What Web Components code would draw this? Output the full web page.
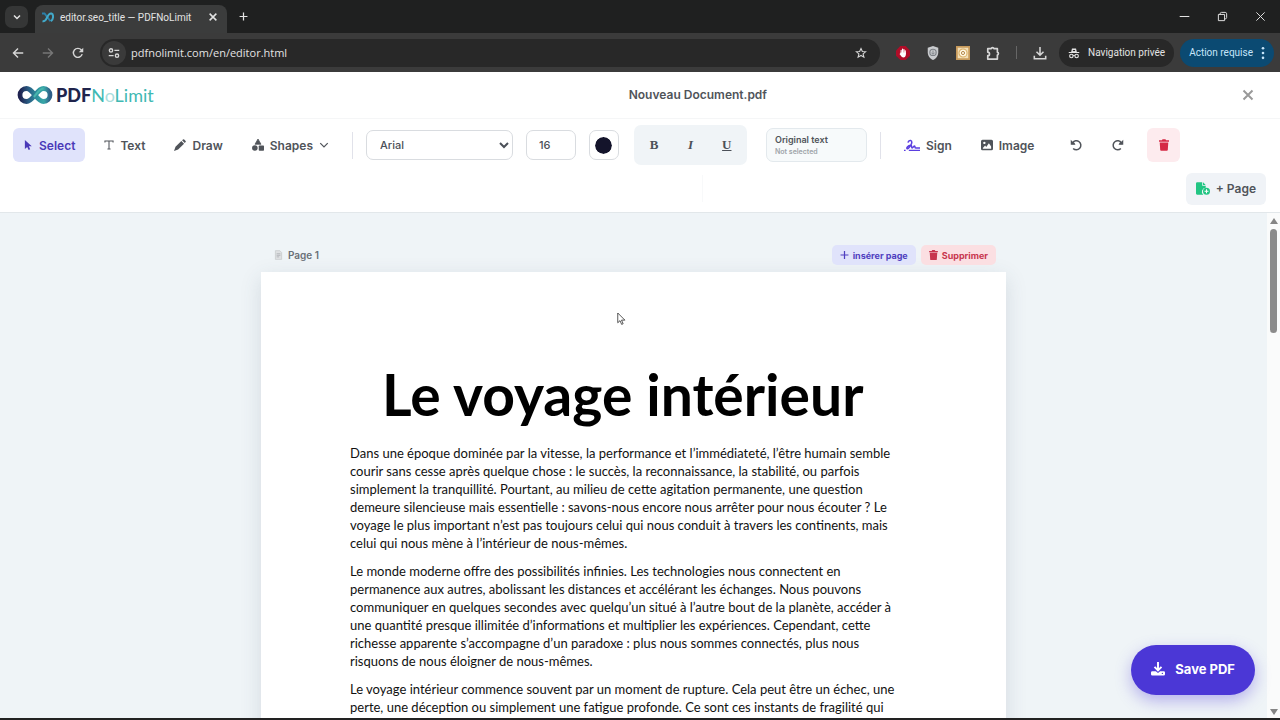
<!DOCTYPE html>
<html lang="en">
<head>
<meta charset="utf-8">
<meta name="viewport" content="width=device-width, initial-scale=1">
<title>editor.seo_title — PDFNoLimit</title>
<style>
  body {
    margin: 0;
    height: 100vh;
    overflow: hidden;
    font-family: Inter, sans-serif;
    color: #50545a;
  }
</style>
</head>
<body>
<browser-window>
  <pdf-editor></pdf-editor>
</browser-window>

<script>
/**
 * Registers a custom element whose shadow root is cloned from a template.
 *
 * @param {string} name - The tag name.
 * @param {string} html - Styles and markup of the shadow root.
 */
function register (name, html) {
  const template = document.createElement('template')
  template.innerHTML = html

  customElements.define(name, class extends HTMLElement {
    constructor () {
      super()
      this.attachShadow({ mode: 'open' }).append(template.content.cloneNode(true))
    }
  })
}

// Icon drawings: [viewBox, markup].
const icons = {
  down: ['0 0 16 16', '<path d="M4 6l4 4 4-4" fill="none" stroke="currentColor" stroke-width="2"/>'],
  chevron: ['0 0 16 16', '<path d="M2 5l6 6 6-6" fill="none" stroke="currentColor" stroke-width="2"/>'],
  close: ['0 0 16 16', '<path d="M3.500 3.500l9 9M12.500 3.500l-9 9" fill="none" stroke="currentColor" stroke-width="2"/>'],
  thin: ['0 0 16 16', '<path d="M2 2l12 12M14 2L2 14" fill="none" stroke="currentColor" stroke-width="1.4"/>'],
  cross: ['0 0 16 16', '<path d="M2 2l12 12M14 2L2 14" fill="none" stroke="currentColor" stroke-width="2.6"/>'],
  plus: ['0 0 16 16', '<path d="M8 1v14M1 8h14" fill="none" stroke="currentColor" stroke-width="2.2"/>'],
  back: ['0 0 16 16', '<path d="M15 8H2M8 2L2 8l6 6" fill="none" stroke="currentColor" stroke-width="1.9"/>'],
  forward: ['0 0 16 16', '<path d="M1 8h13M8 2l6 6-6 6" fill="none" stroke="currentColor" stroke-width="1.9"/>'],
  reload: ['0 0 16 16', '<path d="M13.6 9.5A6 6 0 1 1 12.5 4L14 5.5" fill="none" stroke="currentColor" stroke-width="1.9"/><path d="M15 1v6H9z" fill="currentColor"/>'],
  tune: ['0 0 16 16', '<g fill="none" stroke="currentColor" stroke-width="1.8"><circle cx="4" cy="4.5" r="2.2"/><path d="M8.5 4.5H15M1 11.5h6.5"/><circle cx="12" cy="11.5" r="2.2"/></g>'],
  star: ['0 0 24 24', '<path d="M12 3l2.7 6 6.5.6-5 4.3 1.6 6.4L12 17l-5.800 3.300 1.600-6.400-5-4.300 6.500-.6z" fill="none" stroke="currentColor" stroke-width="2.200"/>'],
  adblock: ['0 0 16 16', '<path d="M5 0h6l5 5v6l-5 5H5l-5-5V5z" fill="#b00d28"/><path d="M5.900 9V5M7.500 8.500V3.500M9.100 8.500V4M10.600 9V5.500" stroke="#fff" stroke-width="1.300" stroke-linecap="round"/><path d="M5.200 7.500h6v3q-.5 2.500-2.700 2.500Q6.500 13 4 9l1-.8z" fill="#fff"/>'],
  shield: ['0 0 16 16', '<path d="M8 0l6 2v5c0 4-2.500 7.500-6 9-3.500-1.500-6-5-6-9V2z" fill="#c9cbce"/><circle cx="8" cy="7.300" r="3.600" fill="none" stroke="#7c8086" stroke-width="1.300"/><path d="M8 5v4.500M6 7.500l2 2 2-2" fill="none" stroke="#7c8086"/>'],
  cookie: ['0 0 16 16', '<path d="M0 0h16v16H0z" fill="#c79a5b"/><path d="M2 2h12v12H2z" fill="#f2dfb8"/><circle cx="8" cy="8" r="4.600" fill="#fff7e2" stroke="#d9ad62" stroke-width="1.200"/><circle cx="8" cy="8" r="1.800" fill="none" stroke="#a9793c"/>'],
  puzzle: ['0 0 16 16', '<path d="M2 3h3.800a1.800 1.800 0 0 1 3.400 0H13v4a1.800 1.800 0 0 1 0 3.400V15H2v-4a2 2 0 0 0 0-4z" fill="none" stroke="currentColor" stroke-width="1.900" stroke-linejoin="round"/>'],
  download: ['0 0 16 16', '<path d="M8 1v9M4 6.500l4 4 4-4M1.500 11v3.500h13V11" fill="none" stroke="currentColor" stroke-width="1.800"/>'],
  incognito: ['0 0 16 16', '<path d="M4.200 6.500L5.300 2h5.400l1.100 4.500zM1 6.500h14V8H1z" fill="currentColor"/><g fill="none" stroke="currentColor" stroke-width="1.500"><circle cx="4.500" cy="12" r="2.300"/><circle cx="11.500" cy="12" r="2.300"/><path d="M6.800 11.500c.8-.5 1.600-.5 2.400 0"/></g><path d="M6.500 4h3v1.500h-3z" fill="#282828"/>'],
  dots: ['0 0 4 16', '<g fill="currentColor"><circle cx="2" cy="2.500" r="1.500"/><circle cx="2" cy="8" r="1.500"/><circle cx="2" cy="13.500" r="1.500"/></g>'],
  minimize: ['0 0 16 16', '<path d="M1 8h14" stroke="currentColor" stroke-width="1.500"/>'],
  restore: ['0 0 16 16', '<path d="M2 5h9v9H2zM4.500 5V4c0-1 .8-2 2-2H12c1.200 0 2 .8 2 2v5.500c0 1.200-.8 2-2 2h-1" fill="none" stroke="currentColor" stroke-width="1.400" stroke-linejoin="round"/>'],
  pointer: ['0 0 16 16', '<path d="M3 0v14.500l3.700-3.500 2.300 5 2.500-1.100-2.200-4.900H14z" fill="currentColor"/>'],
  text: ['0 0 16 16', '<path d="M1.500 4V1.500h13V4M8 1.500v13M5.500 14.500h5" fill="none" stroke="currentColor" stroke-width="1.700"/>'],
  pencil: ['0 0 16 16', '<path d="M10.800 1.600L12 .6q.8-.6 1.600 0l1.900 1.900q.6.800 0 1.600l-1.200 1.200zM9.800 2.600l3.600 3.600L5.500 14 0 16l2-5.700z" fill="currentColor"/>'],
  shapes: ['0 0 16 16', '<path d="M8 0l4 7H4z" fill="currentColor" stroke="currentColor" stroke-linejoin="round"/><circle cx="3.800" cy="12" r="3.700" fill="currentColor"/><rect x="9" y="8.700" width="7" height="7" rx="1" fill="currentColor"/>'],
  sign: ['0 0 20 16', '<path d="M5 4.500C5.500 2 7 1.500 8.300 1.800c2.200.6 1.700 3.400 0 6C6.500 10.500 5 12.600 3.800 11.800 2.800 11 5 8 8.300 7.800c2.200 0 .6 3.200 1.900 3.200 1.300 0 1.800-2.500 3-2.500 1 0-.2 2.500 1.300 2.500H20" fill="none" stroke="#5b3fe0" stroke-width="1.900"/><path d="M0 14.200h2M6 14.200h14" stroke="#5b3fe0" stroke-width="1.600"/>'],
  image: ['0 0 16 16', '<path fill-rule="evenodd" d="M2 1h12q2 0 2 2v10q0 2-2 2H2q-2 0-2-2V3q0-2 2-2zM4.500 3.500a1.600 1.600 0 1 0 .01 0zM2.500 13h11V10L10.500 5.500 7 10.500 5.500 8.800 2.500 12z" fill="currentColor"/>'],
  undo: ['0 0 16 16', '<path d="M2.500 6h3.800M3.500 5A6 6 0 1 1 4.200 12.600" fill="none" stroke="currentColor" stroke-width="2"/><path d="M1 1v6.500h6.500z" fill="currentColor"/>'],
  redo: ['0 0 16 16', '<path d="M12.500 5A6 6 0 1 0 11.800 12.600M9.700 6h3.800" fill="none" stroke="currentColor" stroke-width="2"/><path d="M15 1v6.500H8.500z" fill="currentColor"/>'],
  trash: ['0 0 14 16', '<path d="M0 1.500h4L5 0h4l1 1.500h4v2H0zM1 4.500h12L12.300 15q-.1 1-1.300 1H3q-1.200 0-1.300-1z" fill="currentColor"/>'],
  filePlus: ['0 0 18 16', '<path d="M1.500 0H8v4.500h4.500V7A5 5 0 0 0 9.500 16h-8Q0 16 0 14.500v-13Q0 0 1.500 0zM9 0l3.500 3.500H9z" fill="#22c583"/><circle cx="13.500" cy="11.500" r="4.500" fill="#22c583"/><path d="M13.500 9v5M11 11.500h5" stroke="#fff" stroke-width="1.300"/>'],
  page: ['0 0 12 16', '<path d="M1 1h7l3 3v11H1z" fill="#dfe1e3" stroke="#c0c3c6"/><path d="M3 6h6M3 8.500h6M3 11h4" stroke="#9da1a5"/>'],
  save: ['0 0 16 16', '<path d="M8 0v9M4 5.500l4 4 4-4" fill="none" stroke="currentColor" stroke-width="2.200"/><path d="M1.500 10.500h4L8 12.500l2.500-2h4q1.500 0 1.500 1.500v2q0 1.500-1.500 1.500h-13Q0 15.500 0 14v-2q0-1.500 1.500-1.500z" fill="currentColor"/><circle cx="13" cy="13" r=".8" fill="#4b37d6"/>'],
  arrow: ['0 0 12 18', '<path d="M1 1v13l3-2.800 2.200 5 2-.9L6 10.500h4.500z" fill="#fff" stroke="#222"/>'],
  favicon: ['0 0 26 22', '<g fill="none" stroke-width="4"><path d="M2 3h5l12 15.500" stroke="#2b7fa8"/><path d="M3 18.500c6 1 7-3 9-7.500s5-9 9-8c4.500 1.500 4 12-1 15.500" stroke="#42a9c9"/></g>'],
  infinity: ['0 0 36 20', `
    <defs>
      <linearGradient id="a" x1="0" x2="1"><stop stop-color="#1f2350"/><stop offset=".3" stop-color="#2a5f86"/><stop offset=".6" stop-color="#2f959f"/><stop offset=".8" stop-color="#3aa7a8"/><stop offset="1" stop-color="#2f5f88"/></linearGradient>
    </defs>
    <path d="M18 10C14.500 5.500 12.500 3.500 9.500 3.500a6.500 6.500 0 0 0 0 13c3 0 5-2 8.500-6.500s5.500-6.500 8.500-6.500a6.500 6.500 0 0 1 0 13c-3 0-5-2-8.500-6.500" fill="none" stroke="url(#a)" stroke-width="4.800"/>
    <path d="M17 12c3-4 5.500-8.500 9.500-8.500" fill="none" stroke="#48b5ad" stroke-width="2.200"/>`]
}

/**
 * An inline SVG icon, picked by its name attribute.
 */
class UiIcon extends HTMLElement {
  constructor () {
    super()
    this.attachShadow({ mode: 'open' })
  }

  /**
   * Called when the element is inserted into the DOM.
   */
  connectedCallback () {
    const [box, markup] = icons[this.getAttribute('name')]
    this.shadowRoot.innerHTML = `
      <style>
        :host { display: inline-flex; flex: none; width: 12px; height: 12px; }
        svg { width: 100%; height: 100%; }
      </style>
      <svg viewBox="${box}" aria-hidden="true">${markup}</svg>
    `
  }
}
customElements.define('ui-icon', UiIcon)

/**
 * A toolbar button. The label comes in through the slot.
 */
class ToolButton extends HTMLElement {
  constructor () {
    super()
    this.attachShadow({ mode: 'open' }).innerHTML = `
      <style>
        :host { display: flex; flex: none; }
        button {
          display: flex;
          align-items: center;
          justify-content: center;
          gap: 6px;
          height: 34px;
          min-width: 33px;
          padding: 0 10px;
          border: 0;
          border-radius: 6px;
          background: none;
          color: inherit;
          font: 600 12px Inter, sans-serif;
          white-space: nowrap;
        }
        :host([active]) button { background: #e0e3fb; color: #4a39b8; }
        :host([danger]) button { background: #fdebee; color: #d52a45; }
        :host([soft]) button { background: #f0f3f7; height: 32px; }
      </style>
      <button type="button"><slot></slot></button>
    `
  }

  connectedCallback () {
    const label = this.getAttribute('label')
    if (label) {
      this.shadowRoot.querySelector('button').setAttribute('aria-label', label)
    }
  }
}
customElements.define('tool-button', ToolButton)

register('tab-strip', `
  <style>
    :host { display: flex; align-items: flex-end; height: 33px; background: #1f2020; color: #e3e3e3; }
    button { display: flex; align-items: center; justify-content: center; padding: 0; border: 0; background: none; color: inherit; }
    .search { width: 23px; height: 22px; margin: 0 7px 5px 5px; border-radius: 7px; background: #353636; }
    .tab {
      display: flex;
      align-items: center;
      gap: 6px;
      box-sizing: border-box;
      width: 192px;
      height: 28px;
      padding: 0 8px 4px 6px;
      border-radius: 8px 8px 0 0;
      background: #3b3c3c;
      font-size: 10px;
      white-space: nowrap;
    }
    .tab span { flex: 1; }
    .tab .fav { width: 13px; height: 11px; }
    .add { width: 32px; height: 33px; }
    .add ui-icon { width: 9px; height: 9px; }
    .controls { display: flex; gap: 27px; margin-left: auto; padding: 0 14px 11px 0; }
    .controls ui-icon { width: 11px; height: 11px; }
  </style>
  <button class="search" type="button" aria-label="Search tabs"><ui-icon name="down"></ui-icon></button>
  <div class="tab">
    <ui-icon class="fav" name="favicon"></ui-icon>
    <span>editor.seo_title — PDFNoLimit</span>
    <button type="button" aria-label="Close tab"><ui-icon name="close"></ui-icon></button>
  </div>
  <button class="add" type="button" aria-label="New tab"><ui-icon name="plus"></ui-icon></button>
  <div class="controls">
    <button type="button" aria-label="Minimize"><ui-icon name="minimize"></ui-icon></button>
    <button type="button" aria-label="Restore"><ui-icon name="restore"></ui-icon></button>
    <button type="button" aria-label="Close"><ui-icon name="thin"></ui-icon></button>
  </div>
`)

register('address-bar', `
  <style>
    :host { display: flex; align-items: center; box-sizing: border-box; height: 39px; padding: 0 6px 0 12px; background: #3b3b3b; color: #d6d6d6; }
    button { display: flex; align-items: center; justify-content: center; padding: 0; border: 0; background: none; color: inherit; font: inherit; }
    .nav { display: flex; gap: 18px; }
    .nav .off { color: #777; }
    .url { display: flex; flex: 1; align-items: center; height: 28px; margin-left: 16px; padding: 0 13px 0 2px; border-radius: 14px; background: #282828; }
    .site { width: 24px; height: 24px; border-radius: 12px; background: #3a3a3a; }
    input { flex: 1; min-width: 0; padding: 0 0 0 5px; border: 0; background: none; color: #e3e3e3; font: 11px "Open Sans", sans-serif; }
    .ext { display: flex; align-items: center; gap: 16px; padding: 0 12px 0 16px; }
    .ext ui-icon { width: 14px; height: 14px; }
    .bar { width: 1px; height: 13px; background: #666; }
    .pill { gap: 8px; height: 28px; padding: 0 9px; border-radius: 14px; font-size: 10px; white-space: nowrap; }
    .private { background: #282828; color: #e3e3e3; }
    .update { margin-left: 6px; background: #0b4a72; color: #c6e5fa; }
    .update ui-icon { width: 4px; height: 14px; }
  </style>
  <div class="nav">
    <button type="button" aria-label="Back"><ui-icon name="back"></ui-icon></button>
    <button class="off" type="button" aria-label="Forward"><ui-icon name="forward"></ui-icon></button>
    <button type="button" aria-label="Reload"><ui-icon name="reload"></ui-icon></button>
  </div>
  <div class="url">
    <button class="site" type="button" aria-label="Site information"><ui-icon name="tune"></ui-icon></button>
    <input type="text" value="pdfnolimit.com/en/editor.html" aria-label="Address">
    <button type="button" aria-label="Bookmark"><ui-icon name="star"></ui-icon></button>
  </div>
  <div class="ext">
    <ui-icon name="adblock"></ui-icon>
    <ui-icon name="shield"></ui-icon>
    <ui-icon name="cookie"></ui-icon>
    <ui-icon name="puzzle"></ui-icon>
    <span class="bar"></span>
    <ui-icon name="download"></ui-icon>
  </div>
  <button class="pill private" type="button"><ui-icon name="incognito"></ui-icon>Navigation privée</button>
  <button class="pill update" type="button">Action requise<ui-icon name="dots"></ui-icon></button>
`)

register('browser-window', `
  <style>
    :host { display: flex; flex-direction: column; box-sizing: border-box; height: 100%; border-bottom: 2px solid #222; }
    .chrome { font-family: Roboto, sans-serif; }
    main { display: flex; flex: 1; flex-direction: column; min-height: 0; }
  </style>
  <div class="chrome">
    <tab-strip></tab-strip>
    <address-bar></address-bar>
  </div>
  <main><slot></slot></main>
`)

register('app-header', `
  <style>
    :host { display: flex; align-items: center; justify-content: space-between; box-sizing: border-box; height: 47px; padding: 0 26px 0 17px; border-bottom: 1px solid #f5f6f7; background: #fff; }
    a { display: flex; align-items: center; gap: 3px; color: #20244c; font: 900 18px Lato, sans-serif; text-decoration: none; }
    a ui-icon { width: 36px; height: 20px; }
    .teal { color: #3fb9b3; font-weight: 400; }
    .pale { color: #a9dedd; }
    h1 { margin: 0; font-size: 12px; font-weight: 600; line-height: 16px; }
    button { display: flex; padding: 0; border: 0; background: none; color: #999; }
  </style>
  <a href="#"><ui-icon name="infinity"></ui-icon><span>PDF<span class="teal">N<span class="pale">o</span>Limit</span></span></a>
  <h1><slot></slot></h1>
  <button type="button" aria-label="Close editor"><ui-icon name="cross"></ui-icon></button>
`)

register('editor-toolbar', `
  <style>
    :host { display: block; box-sizing: border-box; height: 94px; padding: 6px 14px 6px 13px; border-bottom: 1px solid #e2e7ea; background: #fff; }
    .row, .set, .styles { display: flex; align-items: center; }
    .row { gap: 13px; height: 40px; }
    .row.last { height: 47px; gap: 0; }
    .set { gap: 9px; }
    .rule { flex: none; width: 1px; height: 27px; background: #e1e2ea; }
    .faint { height: 27px; background: #f8f9fa; }
    .left { flex: 10; }
    .right { flex: 7; }
    select, input {
      box-sizing: border-box;
      height: 30px;
      border: 1px solid #d9dce0;
      border-radius: 7px;
      background: #fff;
      color: #4b5058;
      font: 500 11px Inter, sans-serif;
    }
    select { width: 147px; padding: 0 0 0 9px; }
    .size { width: 50px; padding: 0 12px; }
    label { display: flex; align-items: center; justify-content: center; box-sizing: border-box; width: 30px; height: 30px; border: 1px solid #d9dce0; border-radius: 7px; }
    .color { width: 17px; height: 17px; padding: 0; border: 0; border-radius: 50%; appearance: none; }
    .color::-webkit-color-swatch-wrapper { padding: 0; }
    .color::-webkit-color-swatch { border: 0; border-radius: 50%; }
    .styles { box-sizing: border-box; width: 113px; height: 40px; margin-left: 2px; padding: 0 2px; border-radius: 7px; background: #f0f4f7; }
    .styles button { flex: 1; height: 34px; padding: 0; border: 0; background: none; color: #4b5058; font: 700 13px "Liberation Serif", serif; }
    .styles .i { font-style: italic; }
    .styles .u { text-decoration: underline; }
    .original { box-sizing: border-box; width: 101px; height: 34px; margin-left: 6px; padding: 4px 8px; border: 1px solid #e3e9ed; border-radius: 7px; background: #f7fafb; font-size: 9px; font-weight: 600; line-height: 13px; white-space: nowrap; }
    .original small { display: block; color: #a0a5aa; font-size: 7px; font-weight: 600; line-height: 11px; }
    .history { margin-left: 2px; }
    .sign { width: 16px; height: 13px; }
    .file { width: 14px; height: 13px; }
    .bin { width: 10px; }
  </style>
  <div class="row">
    <div class="set">
      <tool-button active><ui-icon name="pointer" style="width: 10px"></ui-icon>Select</tool-button>
      <tool-button><ui-icon name="text" style="width: 10px"></ui-icon>Text</tool-button>
      <tool-button><ui-icon name="pencil"></ui-icon>Draw</tool-button>
      <tool-button><ui-icon name="shapes"></ui-icon>Shapes<ui-icon name="chevron" style="width: 10px"></ui-icon></tool-button>
    </div>
    <span class="rule"></span>
    <select aria-label="Font"><option>Arial</option><option>Times New Roman</option><option>Courier New</option></select>
    <input class="size" type="text" value="16" aria-label="Font size">
    <label><input class="color" type="color" value="#14142b" aria-label="Text colour"></label>
    <div class="styles">
      <button type="button" aria-label="Bold">B</button>
      <button class="i" type="button" aria-label="Italic">I</button>
      <button class="u" type="button" aria-label="Underline">U</button>
    </div>
    <div class="original">Original text<small>Not selected</small></div>
    <span class="rule"></span>
    <div class="set">
      <tool-button><ui-icon class="sign" name="sign"></ui-icon>Sign</tool-button>
      <tool-button><ui-icon name="image"></ui-icon>Image</tool-button>
    </div>
    <div class="set history">
      <tool-button label="Undo"><ui-icon name="undo"></ui-icon></tool-button>
      <tool-button label="Redo"><ui-icon name="redo"></ui-icon></tool-button>
    </div>
    <tool-button danger label="Delete"><ui-icon class="bin" name="trash"></ui-icon></tool-button>
  </div>
  <div class="row last">
    <span class="left"></span>
    <span class="rule faint"></span>
    <span class="right"></span>
    <tool-button soft><ui-icon class="file" name="filePlus"></ui-icon>+ Page</tool-button>
  </div>
`)

register('document-page', `
  <style>
    :host { display: block; width: 745px; max-width: 100%; }
    header { display: flex; align-items: center; gap: 5px; height: 20px; padding: 0 10px 7px 13px; font-size: 10px; font-weight: 600; }
    header ui-icon { width: 9px; height: 10px; }
    .name { flex: 1; color: #6a7077; }
    button { display: flex; align-items: center; gap: 4px; height: 20px; padding: 0 8px; border: 0; border-radius: 5px; font: 700 9px Inter, sans-serif; }
    .insert { background: #e0e3fb; color: #4f3fc0; }
    .remove { background: #fbdfe2; color: #c8364e; }
    article { min-height: 1053px; box-sizing: border-box; padding: 90px 89px; background: #fff; box-shadow: 0 6px 20px rgba(60, 80, 100, .15); }
  </style>
  <header>
    <ui-icon name="page"></ui-icon>
    <span class="name"><slot name="name"></slot></span>
    <button class="insert" type="button"><ui-icon name="plus"></ui-icon>insérer page</button>
    <button class="remove" type="button"><ui-icon name="trash"></ui-icon>Supprimer</button>
  </header>
  <article><slot></slot></article>
`)

register('scroll-track', `
  <style>
    :host { display: flex; flex: none; flex-direction: column; align-items: center; gap: 5px; box-sizing: border-box; width: 13px; padding: 5px 0 3px; background: #fafbfb; }
    .arrow { border: 4px solid transparent; border-top: 0; border-bottom: 6px solid #858585; }
    .arrow.end { margin-top: auto; border-bottom: 0; border-top: 6px solid #858585; }
    .thumb { width: 7px; height: 104px; border-radius: 4px; background: #8b8b8b; }
  </style>
  <span class="arrow"></span>
  <span class="thumb"></span>
  <span class="arrow end"></span>
`)

register('save-button', `
  <style>
    :host { position: absolute; right: 25px; bottom: 23px; }
    button { display: flex; align-items: center; gap: 10px; height: 50px; padding: 0 20px 2px; border: 0; border-radius: 25px; background: #4b37d6; color: #fff; font: 700 13px Inter, sans-serif; box-shadow: 0 6px 16px rgba(75, 55, 214, .35); white-space: nowrap; }
    ui-icon { width: 14px; height: 14px; }
  </style>
  <button type="button"><ui-icon name="save"></ui-icon><slot></slot></button>
`)

register('pdf-editor', `
  <style>
    :host { position: relative; display: flex; flex: 1; flex-direction: column; min-height: 0; }
    .work { display: flex; flex: 1; min-height: 0; }
    .canvas { display: flex; flex: 1; justify-content: center; overflow: hidden; padding-top: 32px; background: #eff4f7; }
    h2 { margin: 0 0 18px 32px; color: #000; font: 700 57px/64px Lato, sans-serif; white-space: nowrap; }
    p { margin: 0 0 10px; color: #111; font: 13px/18px Lato, sans-serif; white-space: nowrap; }
    .mouse { position: absolute; left: 617px; top: 240px; width: 9px; height: 14px; }
  </style>
  <app-header>Nouveau Document.pdf</app-header>
  <editor-toolbar></editor-toolbar>
  <div class="work">
    <div class="canvas">
      <document-page>
        <span slot="name">Page 1</span>
        <h2>Le voyage intérieur</h2>
        <p>Dans une époque dominée par la vitesse, la performance et l’immédiateté, l’être humain semble<br>
        courir sans cesse après quelque chose : le succès, la reconnaissance, la stabilité, ou parfois<br>
        simplement la tranquillité. Pourtant, au milieu de cette agitation permanente, une question<br>
        demeure silencieuse mais essentielle : savons-nous encore nous arrêter pour nous écouter ? Le<br>
        voyage le plus important n’est pas toujours celui qui nous conduit à travers les continents, mais<br>
        celui qui nous mène à l’intérieur de nous-mêmes.</p>
        <p>Le monde moderne offre des possibilités infinies. Les technologies nous connectent en<br>
        permanence aux autres, abolissant les distances et accélérant les échanges. Nous pouvons<br>
        communiquer en quelques secondes avec quelqu’un situé à l’autre bout de la planète, accéder à<br>
        une quantité presque illimitée d’informations et multiplier les expériences. Cependant, cette<br>
        richesse apparente s’accompagne d’un paradoxe : plus nous sommes connectés, plus nous<br>
        risquons de nous éloigner de nous-mêmes.</p>
        <p>Le voyage intérieur commence souvent par un moment de rupture. Cela peut être un échec, une<br>
        perte, une déception ou simplement une fatigue profonde. Ce sont ces instants de fragilité qui</p>
      </document-page>
    </div>
    <scroll-track></scroll-track>
  </div>
  <save-button>Save PDF</save-button>
  <ui-icon class="mouse" name="arrow"></ui-icon>
`)
</script>
</body>
</html>
